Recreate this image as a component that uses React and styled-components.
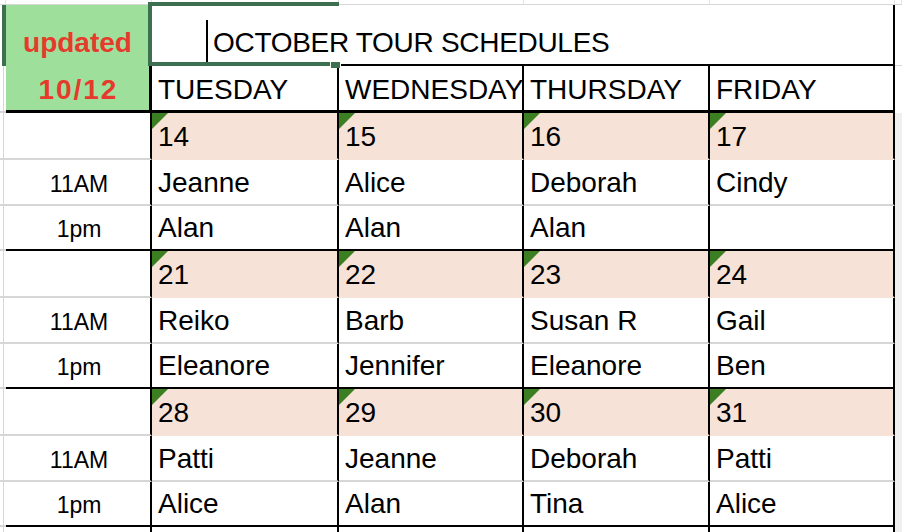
import React from 'react'
import styled, { createGlobalStyle, css } from 'styled-components'

const GlobalStyle = createGlobalStyle`
  html, body { margin: 0; padding: 0; background: #fff; }
  body { font-family: "Liberation Sans", Arial, sans-serif; color: #000; }
`

const GRID = '#d6d6d6'
const INK = '#000'
const PEACH = '#f7e2d8'

const Sheet = styled.div`
  position: relative;
  width: 902px;
  height: 532px;
  overflow: hidden;
  display: grid;
  grid-template-columns: 6px 146px 187px 185px 186px 185px 7px;
  grid-template-rows: 5px 61px 47px repeat(3, 47px 46px 45px) 5px;
  background: #fff;
`

const TopCell = styled.div`
  box-sizing: border-box;
  border-bottom: 1px solid ${GRID};
  border-right: 1px solid #e4e4e4;
`

const EdgeCell = styled.div`
  box-sizing: border-box;
  background: linear-gradient(to right, transparent 3px, ${GRID} 3px, ${GRID} 4px, transparent 4px);
  border-bottom: ${p => (p.$line ? `2px solid ${GRID}` : 'none')};
  ${p => p.$marked && css`box-shadow: inset -4px 0 0 #3d7050;`}
`

const RightStrip = styled.div`
  box-sizing: border-box;
  background: ${p => (p.$shade ? '#f0f0f0' : '#fff')};
  border-bottom: ${p => (p.$line ? `1px solid ${GRID}` : 'none')};
`

const Stamp = styled.div`
  grid-row: span 2;
  box-sizing: border-box;
  background: #9ee09b;
  border-right: 3px solid ${INK};
  border-bottom: 3px solid ${INK};
  display: flex;
  flex-direction: column;
  align-items: center;
  gap: 19px;
  padding-top: 24px;
  color: #e63a2c;
  font-weight: bold;
  font-size: 28px;
  line-height: 1;
`

const StampDate = styled.span`
  letter-spacing: 0.07em;
  margin-left: 0.07em;
`

const Title = styled.div`
  grid-column: span 4;
  box-sizing: border-box;
  border-right: 2px solid ${INK};
  border-bottom: 2px solid ${INK};
  display: flex;
  align-items: flex-end;
  padding: 0 0 2px 54px;
  font-size: 28px;
  line-height: 1;
  white-space: nowrap;
  letter-spacing: -0.3px;
`

const Caret = styled.span`
  width: 2px;
  height: 42px;
  background: ${INK};
  margin-right: 5px;
  flex: none;
`

const TitleText = styled.span`
  margin-bottom: 5px;
`

const DayHead = styled.div`
  box-sizing: border-box;
  border-right: 2px solid ${INK};
  border-bottom: 3px solid ${INK};
  display: flex;
  align-items: flex-end;
  padding: 0 0 6px 6px;
  font-size: 28px;
  line-height: 1;
  white-space: nowrap;
  min-width: 0;
`

const bottomLine = {
  date: `2px solid transparent`,
  mid: `2px solid ${GRID}`,
  last: `2px solid ${INK}`,
}

const TimeCell = styled.div`
  box-sizing: border-box;
  border-right: 2px solid ${INK};
  border-bottom: ${p => (p.$kind === 'last' ? bottomLine.last : bottomLine.mid)};
  display: flex;
  align-items: flex-end;
  justify-content: center;
  padding: 0 0 8px 2px;
  font-size: 23px;
  line-height: 1;
`

const DayCell = styled.div`
  position: relative;
  box-sizing: border-box;
  border-right: 2px solid ${INK};
  border-bottom: ${p => bottomLine[p.$kind]};
  background: ${p => (p.$kind === 'date' ? PEACH : '#fff')};
  display: flex;
  align-items: flex-end;
  padding: 0 0 7px 6px;
  font-size: 28px;
  line-height: 1;
  white-space: nowrap;
  min-width: 0;

  ${p => p.$kind === 'date' && css`
    &::before {
      content: '';
      position: absolute;
      top: 0;
      left: 0;
      border-top: 16px solid #3b7f22;
      border-right: 16px solid transparent;
    }
  `}
`

const TailCell = styled.div`
  border-right: 2px solid ${INK};
`

const Selection = styled.div`
  position: absolute;
  left: 148px;
  top: 2px;
  width: 191px;
  height: 64px;
  box-sizing: border-box;
  border: 4px solid #3d7050;
  border-right: none;
  pointer-events: none;
`

const Handle = styled.div`
  position: absolute;
  left: 330px;
  top: 61px;
  width: 9px;
  height: 6px;
  background: #3d7050;
  border: 1.5px solid #fff;
  border-bottom: none;
`

const days = ['TUESDAY', 'WEDNESDAY', 'THURSDAY', 'FRIDAY']

const weeks = [
  { dates: ['14', '15', '16', '17'], am: ['Jeanne', 'Alice', 'Deborah', 'Cindy'], pm: ['Alan', 'Alan', 'Alan', ''] },
  { dates: ['21', '22', '23', '24'], am: ['Reiko', 'Barb', 'Susan R', 'Gail'], pm: ['Eleanore', 'Jennifer', 'Eleanore', 'Ben'] },
  { dates: ['28', '29', '30', '31'], am: ['Patti', 'Jeanne', 'Deborah', 'Patti'], pm: ['Alice', 'Alan', 'Tina', 'Alice'] },
]

function WeekRows({ week, wi }) {
  const rows = [
    { kind: 'date', label: '', cells: week.dates },
    { kind: 'mid', label: '11AM', cells: week.am },
    { kind: 'last', label: '1pm', cells: week.pm },
  ]
  return rows.map((row, ri) => (
    <React.Fragment key={`${wi}-${ri}`}>
      <EdgeCell $line />
      <TimeCell $kind={row.kind}>{row.label}</TimeCell>
      {row.cells.map((c, ci) => (
        <DayCell key={ci} $kind={row.kind}>{c}</DayCell>
      ))}
      <RightStrip $shade />
    </React.Fragment>
  ))
}

export default function App() {
  return (
    <>
      <GlobalStyle />
      <Sheet>
        {Array.from({ length: 7 }).map((_, i) => <TopCell key={i} />)}

        <EdgeCell $marked />
        <Stamp>
          <span>updated</span>
          <StampDate>10/12</StampDate>
        </Stamp>
        <Title>
          <Caret />
          <TitleText>OCTOBER TOUR SCHEDULES</TitleText>
        </Title>
        <RightStrip $line />

        <EdgeCell $line />
        {days.map(d => <DayHead key={d}>{d}</DayHead>)}
        <RightStrip />

        {weeks.map((w, wi) => <WeekRows key={wi} week={w} wi={wi} />)}

        <EdgeCell />
        {Array.from({ length: 5 }).map((_, i) => <TailCell key={i} />)}
        <RightStrip $shade />

        <Selection />
        <Handle />
      </Sheet>
    </>
  )
}
